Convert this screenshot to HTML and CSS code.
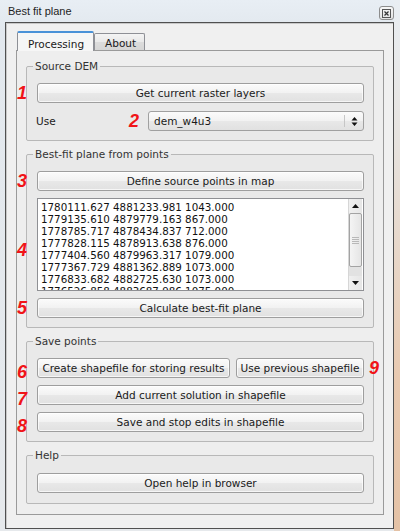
FILE: index.html
```html
<!DOCTYPE html>
<html>
<head>
<meta charset="utf-8">
<title>Best fit plane</title>
<link rel="stylesheet" href="styles.css">
</head>
<body>
<div class="window">
  <div class="titlebar">
    <span class="title">Best fit plane</span>
    <span class="close">
      <svg width="9" height="9" viewBox="0 0 9 9"><rect x="0.5" y="0.5" width="8" height="8" fill="none" stroke="#555"/><path d="M2.5 2.5 L6.5 6.5 M6.5 2.5 L2.5 6.5" stroke="#333" stroke-width="1.2"/></svg>
    </span>
  </div>
  <div class="client">
    <div class="tabs">
      <div class="tab active">Processing</div>
      <div class="tab">About</div>
    </div>
    <div class="pane">
      <fieldset class="group first">
        <legend>Source DEM</legend>
        <div class="row"><span class="mark">1</span><button class="btn">Get current raster layers</button></div>
        <div class="row use-row">
          <span class="label">Use</span>
          <span class="mark inline">2</span>
          <div class="combo">
            <span class="combo-text">dem_w4u3</span>
            <span class="combo-arrow"><svg width="7" height="11" viewBox="0 0 7 11"><path d="M3.5 1 L6.5 4.5 L0.5 4.5 Z M0.5 6.5 L6.5 6.5 L3.5 10 Z" fill="#111"/></svg></span>
          </div>
        </div>
      </fieldset>

      <fieldset class="group">
        <legend>Best-fit plane from points</legend>
        <div class="row"><span class="mark">3</span><button class="btn">Define source points in map</button></div>
        <div class="row"><span class="mark list-mark">4</span>
          <div class="list">
            <div class="list-lines">1780111.627 4881233.981 1043.000
1779135.610 4879779.163 867.000
1778785.717 4878434.837 712.000
1777828.115 4878913.638 876.000
1777404.560 4879963.317 1079.000
1777367.729 4881362.889 1073.000
1776833.682 4882725.630 1073.000
1776526.858 4883687.986 1075.000
1776201.442 4884102.310 1081.000</div>
            <div class="scrollbar">
              <div class="sb-btn"><svg width="7" height="4" viewBox="0 0 7 4"><path d="M3.5 0 L7 4 L0 4 Z" fill="#111"/></svg></div>
              <div class="sb-thumb"><span class="grip"></span></div>
              <div class="sb-track"></div>
              <div class="sb-btn"><svg width="7" height="4" viewBox="0 0 7 4"><path d="M0 0 L7 0 L3.5 4 Z" fill="#111"/></svg></div>
            </div>
          </div>
        </div>
        <div class="row"><span class="mark">5</span><button class="btn">Calculate best-fit plane</button></div>
      </fieldset>

      <fieldset class="group">
        <legend>Save points</legend>
        <div class="row split">
          <span class="mark low">6</span>
          <button class="btn btn-wide">Create shapefile for storing results</button>
          <button class="btn">Use previous shapefile</button>
          <span class="mark after">9</span>
        </div>
        <div class="row"><span class="mark low">7</span><button class="btn">Add current solution in shapefile</button></div>
        <div class="row"><span class="mark low">8</span><button class="btn">Save and stop edits in shapefile</button></div>
      </fieldset>

      <fieldset class="group help">
        <legend>Help</legend>
        <div class="row"><button class="btn">Open help in browser</button></div>
      </fieldset>
    </div>
  </div>
</div>
</body>
</html>
```

FILE: styles.css
```css
* { box-sizing: border-box; }
html, body { margin: 0; padding: 0; }
body {
  width: 400px;
  height: 531px;
  overflow: hidden;
  font-family: "DejaVu Sans", sans-serif;
  font-size: 10.5px;
  color: #1a1a1a;
  background: #e4eaf0;
}
.window {
  height: 531px;
  display: flex;
  flex-direction: column;
  background:
    linear-gradient(180deg, #e9eef3 0px, #e7e3df 140px, #e8c9b0 380px, #e4c2a6 531px) right top / 6px 100% no-repeat,
    linear-gradient(180deg, #e8eef4 0px, #e2e8ee 30px, #e6e9ec 100%);
}
.titlebar {
  height: 22px;
  flex: none;
  display: flex;
  align-items: center;
  justify-content: space-between;
  padding: 0 6px 0 8px;
}
.title {
  font-family: "Liberation Sans", sans-serif;
  font-size: 11px;
  color: #1e1e1e;
  margin-top: -1px;
}
.close {
  width: 15px;
  height: 14px;
  align-self: flex-end;
  margin-bottom: 2px;
  border: 1px solid #8d8d8d;
  border-radius: 3px;
  background: linear-gradient(#f7f7f7, #e2e2e2);
  display: flex;
  align-items: center;
  justify-content: center;
}
.client {
  flex: 1;
  margin: 0 6px 2px 5px;
  border: 1px solid #505050;
  box-shadow: inset 1px 1px 0 #c8c8c8;
  background: #f0f0f0;
  display: flex;
  flex-direction: column;
  padding: 8px 9px 13px 10px;
}
.tabs {
  height: 19px;
  flex: none;
  display: flex;
  align-items: flex-end;
  padding-left: 1px;
  position: relative;
  z-index: 1;
}
.tab {
  height: 17px;
  padding: 1px 8px 0 10px;
  border: 1px solid #8e9096;
  border-bottom: none;
  border-radius: 2px 2px 0 0;
  background: linear-gradient(#f4f4f4, #e9e9e9 50%, #dcdcdc 51%, #d6d6d6);
  display: flex;
  align-items: center;
  color: #1a1a1a;
}
.tab.active {
  height: 20px;
  margin-bottom: -1px;
  padding: 3px 9px 0 10px;
  border-top: 2px solid #4a92d8;
  background: #f6f6f6;
}
.pane {
  flex: 1;
  border: 1px solid #9a9a9a;
  background: #eeeeee;
  display: flex;
  flex-direction: column;
  gap: 7px;
  padding: 9px 9px 0 9px;
}
.group {
  margin: 0;
  min-width: 0;
  padding: 10px 9px 9px 10px;
  border: 1px solid #b8b8b8;
  border-radius: 2px;
  background: #e9e9e9;
  display: flex;
  flex-direction: column;
  gap: 7px;
}
.group.first { gap: 8px; }
.group legend {
  padding: 0 2px;
  margin-left: -4px;
  line-height: 13px;
  color: #333333;
}
.group.help { padding-top: 11px; padding-bottom: 10px; }
.row {
  position: relative;
  display: flex;
}
.row.split { gap: 6px; }
.mark {
  position: absolute;
  left: -20px;
  top: 50%;
  transform: translateY(-50%);
  font-family: "Liberation Sans", sans-serif;
  font-style: italic;
  font-weight: bold;
  font-size: 18px;
  line-height: 18px;
  color: #f01418;
}
.mark.low { transform: translateY(-30%); }
.mark.list-mark { top: 56%; }
.mark.after { left: auto; right: -15px; }
.mark.inline {
  position: static;
  transform: none;
  width: 11px;
  margin-right: 8px;
}
.btn {
  flex: 1;
  height: 20px;
  margin: 0;
  padding: 0;
  font: inherit;
  color: #1a1a1a;
  border: 1px solid #9e9e9e;
  border-radius: 3px;
  background: linear-gradient(#fbfbfb, #f2f2f2 48%, #e8e8e8 52%, #e1e1e1);
  box-shadow: inset 0 0 0 1px rgba(255,255,255,0.7);
  white-space: nowrap;
}
.btn-wide { flex: none; width: 193px; }
.use-row { align-items: center; }
.label {
  width: 93px;
  margin-left: -1px;
  color: #1a1a1a;
}
.combo {
  flex: 1;
  height: 20px;
  display: flex;
  border: 1px solid #a0a0a0;
  border-radius: 3px;
  background: linear-gradient(#fbfbfb, #f2f2f2 48%, #e8e8e8 52%, #e1e1e1);
}
.combo-text {
  flex: 1;
  padding-left: 5px;
  line-height: 18px;
}
.combo-arrow {
  width: 19px;
  margin: 3px 0;
  border-left: 1px solid #c6c6c6;
  display: flex;
  align-items: center;
  justify-content: center;
}
.list {
  flex: 1;
  height: 93px;
  display: flex;
  border: 1px solid #8f9094;
  background: #ffffff;
}
.list-lines {
  flex: 1;
  overflow: hidden;
  padding: 2px 0 0 3px;
  font-size: 10.3px;
  line-height: 12px;
  white-space: pre;
  color: #111111;
}
.scrollbar {
  width: 14px;
  margin-right: 1px;
  display: flex;
  flex-direction: column;
  border-left: 1px solid #d6d6d6;
  background: linear-gradient(90deg, #e2e2e2, #f0f0f0);
}
.sb-btn {
  height: 14px;
  display: flex;
  align-items: center;
  justify-content: center;
  background: linear-gradient(90deg, #f0f0f0, #e6e6e6);
}
.sb-thumb {
  height: 54px;
  border: 1px solid #a3a3a3;
  border-radius: 2px;
  background: linear-gradient(90deg, #f4f4f4, #e5e5e5);
  display: flex;
  align-items: center;
  justify-content: center;
}
.grip {
  width: 7px;
  height: 7px;
  background: repeating-linear-gradient(180deg, #b8b8b8 0 1px, transparent 1px 2px);
}
.sb-track {
  flex: 1;
  background: #e2e2e2;
}
```
